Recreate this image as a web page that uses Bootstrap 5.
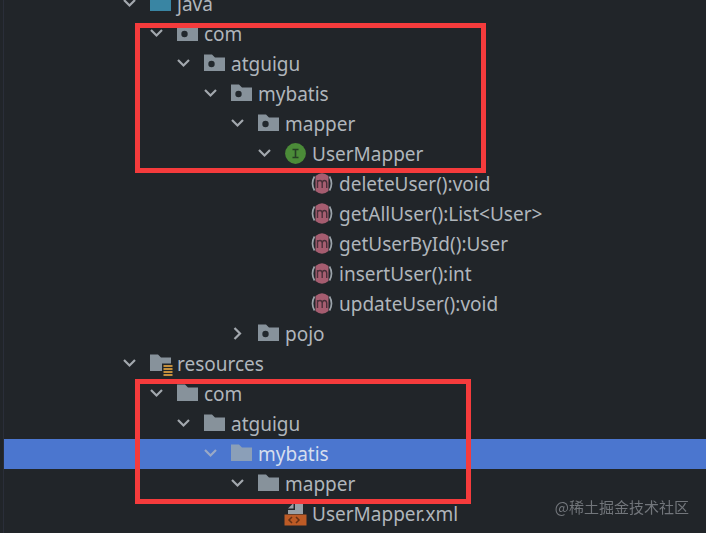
<!DOCTYPE html>
<html lang="en">
<head>
<meta charset="utf-8">
<meta name="viewport" content="width=device-width, initial-scale=1">
<title>Project tree</title>
<link href="https://cdn.jsdelivr.net/npm/bootstrap@5.3.0/dist/css/bootstrap.min.css" rel="stylesheet">
<style>
body { background: #212529; color: #b0b6bc; font-family: "Noto Sans", "Noto Sans CJK SC", sans-serif; font-size: 19px; line-height: 30px; }
.panel { border-left: 1px solid #2a2e39; margin-left: 3px; }
.tree { margin-top: -11px; }
.tree-row { height: 30px; padding-left: calc(116px + var(--level) * 27px); }
.l0 { --level: 0; } .l1 { --level: 1; } .l2 { --level: 2; } .l3 { --level: 3; }
.l4 { --level: 4; } .l5 { --level: 5; } .l6 { --level: 6; }
.toggle { width: 20px; height: 30px; color: #a3a8ae; }
.glyph { width: 24px; height: 24px; margin-left: 9px; margin-right: 4px; }
.leaf { margin-left: 29px; }
.selected { background: #4b76cf; color: #d6deee; }
.selected .toggle { color: #9aa9c6; }
.marker { border: 5px solid #f53b3c; pointer-events: none; left: 131px; }
.marker-source { top: 4px; width: 351px; height: 150px; }
.marker-resource { top: 0; width: 336px; height: 125px; }
.watermark { right: 17px; bottom: 14px; font: 15px/24px "Noto Sans CJK SC", sans-serif; color: #72767b; }
</style>
</head>
<body>
<svg class="d-none" aria-hidden="true">
  <symbol id="down" viewBox="0 0 20 30"><path d="M4 11l5.500 5.500L15 11" fill="none" stroke="currentColor" stroke-width="2.200"/></symbol>
  <symbol id="right" viewBox="0 0 20 30"><path d="M6.500 9l5.500 5.500L6.500 20" fill="none" stroke="currentColor" stroke-width="2.200"/></symbol>
  <symbol id="folder" viewBox="0 0 24 24"><path d="M1 2.500h8l3 3h10V19H1z" fill="#87929b"/></symbol>
  <symbol id="folder-selected" viewBox="0 0 24 24"><path d="M1 2.500h8l3 3h10V19H1z" fill="#8b9fb8"/></symbol>
  <symbol id="source" viewBox="0 0 24 24"><path d="M1 2.500h8l3 3h10V19H1z" fill="#3985a3"/></symbol>
  <symbol id="package" viewBox="0 0 24 24"><path d="M1 2.500h8l3 3h10V19H1z" fill="#87929b"/><circle cx="8.500" cy="12" r="3.200" fill="#22282d"/></symbol>
  <symbol id="resources" viewBox="0 0 24 24"><path d="M1 2.500h8l3 3h10v6h-9V19H1z" fill="#87929b"/><path d="M14.500 14h9M14.500 17h9M14.500 20h9M14.500 23h9" stroke="#c48f3d" stroke-width="1.900"/></symbol>
  <symbol id="interface" viewBox="0 0 24 24"><circle cx="11.500" cy="11.500" r="10.400" fill="#4b8b38"/><path d="M8.500 7.500h6M11.500 7.500v8M8.500 15.500h6" fill="none" stroke="#263e25" stroke-width="1.600"/></symbol>
  <symbol id="method" viewBox="0 0 24 24"><path d="M3.500 4.500Q-.5 11.500 3.500 18.500M18.500 4.500Q22.500 11.500 18.500 18.500" fill="none" stroke="#9ba3aa" stroke-width="1.700"/><path d="M4.500 4Q11-1.500 17.500 4v15Q11 24.500 4.500 19z" fill="#a65d70"/><path d="M6.500 16V8M6.500 10q.5-1.500 2.500-1.500T11.200 11v5M11.200 11q.3-2.500 2.300-2.500t2.200 2.500v5" fill="none" stroke="#4a303a" stroke-width="1.400"/></symbol>
  <symbol id="xml" viewBox="0 0 24 24"><path d="M11 1h8v11H4V8h7z" fill="#98a0a7"/><path d="M4 6.500l5.500-5.500v5.500z" fill="#98a0a7"/><path d="M.5 12.500h22v11H.5z" fill="#bd5b26"/><path d="M8 15l-3 3 3 3M12 15l3 3-3 3" fill="none" stroke="#653116" stroke-width="1.500"/></symbol>
</svg>
<main class="panel min-vh-100 overflow-hidden">
  <div class="tree" role="tree" aria-label="Project files">
    <div class="tree-row l0 d-flex align-items-center" role="treeitem"><button class="toggle btn p-0 border-0 d-flex" aria-label="Collapse java"><svg width="20" height="30"><use href="#down"/></svg></button><svg class="glyph"><use href="#source"/></svg><span>java</span></div>
    <div class="position-relative" role="group">
      <div class="tree-row l1 d-flex align-items-center" role="treeitem"><button class="toggle btn p-0 border-0 d-flex" aria-label="Collapse com"><svg width="20" height="30"><use href="#down"/></svg></button><svg class="glyph"><use href="#package"/></svg><span>com</span></div>
      <div class="tree-row l2 d-flex align-items-center" role="treeitem"><button class="toggle btn p-0 border-0 d-flex" aria-label="Collapse atguigu"><svg width="20" height="30"><use href="#down"/></svg></button><svg class="glyph"><use href="#package"/></svg><span>atguigu</span></div>
      <div class="tree-row l3 d-flex align-items-center" role="treeitem"><button class="toggle btn p-0 border-0 d-flex" aria-label="Collapse mybatis"><svg width="20" height="30"><use href="#down"/></svg></button><svg class="glyph"><use href="#package"/></svg><span>mybatis</span></div>
      <div class="tree-row l4 d-flex align-items-center" role="treeitem"><button class="toggle btn p-0 border-0 d-flex" aria-label="Collapse mapper"><svg width="20" height="30"><use href="#down"/></svg></button><svg class="glyph"><use href="#package"/></svg><span>mapper</span></div>
      <div class="tree-row l5 d-flex align-items-center" role="treeitem"><button class="toggle btn p-0 border-0 d-flex" aria-label="Collapse UserMapper"><svg width="20" height="30"><use href="#down"/></svg></button><svg class="glyph"><use href="#interface"/></svg><span>UserMapper</span></div>
      <div class="marker marker-source position-absolute"></div>
    </div>
    <div class="tree-row l6 d-flex align-items-center" role="treeitem"><svg class="glyph leaf"><use href="#method"/></svg><span>deleteUser():void</span></div>
    <div class="tree-row l6 d-flex align-items-center" role="treeitem"><svg class="glyph leaf"><use href="#method"/></svg><span>getAllUser():List&lt;User&gt;</span></div>
    <div class="tree-row l6 d-flex align-items-center" role="treeitem"><svg class="glyph leaf"><use href="#method"/></svg><span>getUserById():User</span></div>
    <div class="tree-row l6 d-flex align-items-center" role="treeitem"><svg class="glyph leaf"><use href="#method"/></svg><span>insertUser():int</span></div>
    <div class="tree-row l6 d-flex align-items-center" role="treeitem"><svg class="glyph leaf"><use href="#method"/></svg><span>updateUser():void</span></div>
    <div class="tree-row l4 d-flex align-items-center" role="treeitem"><button class="toggle btn p-0 border-0 d-flex" aria-label="Expand pojo"><svg width="20" height="30"><use href="#right"/></svg></button><svg class="glyph"><use href="#package"/></svg><span>pojo</span></div>
    <div class="tree-row l0 d-flex align-items-center" role="treeitem"><button class="toggle btn p-0 border-0 d-flex" aria-label="Collapse resources"><svg width="20" height="30"><use href="#down"/></svg></button><svg class="glyph"><use href="#resources"/></svg><span>resources</span></div>
    <div class="position-relative" role="group">
      <div class="tree-row l1 d-flex align-items-center" role="treeitem"><button class="toggle btn p-0 border-0 d-flex" aria-label="Collapse com"><svg width="20" height="30"><use href="#down"/></svg></button><svg class="glyph"><use href="#folder"/></svg><span>com</span></div>
      <div class="tree-row l2 d-flex align-items-center" role="treeitem"><button class="toggle btn p-0 border-0 d-flex" aria-label="Collapse atguigu"><svg width="20" height="30"><use href="#down"/></svg></button><svg class="glyph"><use href="#folder"/></svg><span>atguigu</span></div>
      <div class="tree-row l3 selected d-flex align-items-center" role="treeitem" aria-selected="true"><button class="toggle btn p-0 border-0 d-flex" aria-label="Collapse mybatis"><svg width="20" height="30"><use href="#down"/></svg></button><svg class="glyph"><use href="#folder-selected"/></svg><span>mybatis</span></div>
      <div class="tree-row l4 d-flex align-items-center" role="treeitem"><button class="toggle btn p-0 border-0 d-flex" aria-label="Collapse mapper"><svg width="20" height="30"><use href="#down"/></svg></button><svg class="glyph"><use href="#folder"/></svg><span>mapper</span></div>
      <div class="marker marker-resource position-absolute"></div>
    </div>
    <div class="tree-row l5 d-flex align-items-center" role="treeitem"><svg class="glyph leaf"><use href="#xml"/></svg><span>UserMapper.xml</span></div>
  </div>
</main>
<div class="watermark position-fixed" lang="zh">@稀土掘金技术社区</div>
<script src="https://cdn.jsdelivr.net/npm/bootstrap@5.3.0/dist/js/bootstrap.bundle.min.js"></script>
</body>
</html>
